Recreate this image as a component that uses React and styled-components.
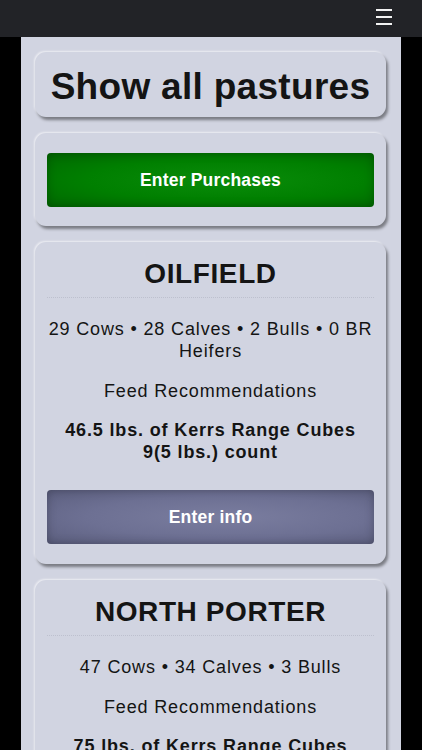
import styled, { createGlobalStyle } from "styled-components"

const GlobalStyle = createGlobalStyle`
body{
  margin:0;
  background-color:#000;
  font-family:"Liberation Sans", Arial, sans-serif;
}
`

const TopBar = styled.div`
height:37px;
background-color:#222327;
display:flex;
align-items:center;
justify-content:flex-end;
padding:0 30px 0 0;
`
const Burger = styled.div`
width:16px;
display:flex;
flex-direction:column;
gap:5px;
margin-top:-3px;
span{
  display:block;
  height:2px;
  background-color:#f2f2f2;
}
`
const Panel = styled.div`
width:380px;
margin:0 auto;
background-color:#d1d4e1;
padding:15px 15px 15px 14px;
box-sizing:border-box;
display:flex;
flex-direction:column;
gap:16px;
min-height:713px;
`
const Card = styled.div`
background-color:#d1d4e1;
border-radius:11px;
padding:${({ pad }) => pad || "15px 12px 20px"};
box-shadow:2px 3px 3px rgba(0,0,0,0.42), -1px -1px 2px rgba(255,255,255,0.6);
text-align:center;
color:#141414;
`
const BigTitle = styled.h1`
margin:0;
font-size:37px;
line-height:41px;
font-weight:700;
letter-spacing:0.3px;
`
const Name = styled.h2`
margin:0;
font-size:28px;
line-height:34px;
font-weight:700;
letter-spacing:0.6px;
padding-bottom:6px;
border-bottom:1px dotted #bdc0ce;
`
const Line = styled.p`
margin:${({ top }) => top}px 0 0;
font-size:18px;
line-height:22px;
letter-spacing:0.85px;
font-weight:${({ bold }) => (bold ? 700 : 400)};
`
const ActionButton = styled.button`
display:block;
width:100%;
height:${({ h }) => h || 54}px;
margin-top:${({ top }) => top || 0}px;
border:none;
border-radius:4px;
color:#fff;
font-family:"Liberation Sans", Arial, sans-serif;
font-size:17.5px;
letter-spacing:0.2px;
font-weight:700;
background:${({ green }) =>
  green
    ? "radial-gradient(ellipse at 55% 50%, #0a8c0a 0%, #007f00 55%, #006700 100%)"
    : "radial-gradient(ellipse at 55% 50%, #7a7d9f 0%, #6d7093 55%, #5b5e7e 100%)"};
box-shadow:inset 0 0 10px rgba(0,0,0,0.25);
cursor:pointer;
`

const pastures = [
  {
    name: "OILFIELD",
    counts: "29 Cows • 28 Calves • 2 Bulls • 0 BR Heifers",
    feed: ["46.5 lbs. of Kerrs Range Cubes", "9(5 lbs.) count"],
  },
  {
    name: "NORTH PORTER",
    counts: "47 Cows • 34 Calves • 3 Bulls",
    feed: ["75 lbs. of Kerrs Range Cubes", "15(5 lbs.) count"],
  },
]

export default function App() {
  return (
    <>
      <GlobalStyle />
      <TopBar>
        <Burger>
          <span />
          <span />
          <span />
        </Burger>
      </TopBar>
      <Panel>
        <Card pad="14px 12px 10px">
          <BigTitle>Show all pastures</BigTitle>
        </Card>
        <Card pad="20px 12px 19px">
          <ActionButton green>Enter Purchases</ActionButton>
        </Card>
        {pastures.map(p => (
          <Card key={p.name}>
            <Name>{p.name}</Name>
            <Line top={20}>{p.counts}</Line>
            <Line top={18}>Feed Recommendations</Line>
            <Line top={17} bold>
              {p.feed[0]}
              <br />
              {p.feed[1]}
            </Line>
            <ActionButton top={27}>Enter info</ActionButton>
          </Card>
        ))}
      </Panel>
    </>
  )
}
